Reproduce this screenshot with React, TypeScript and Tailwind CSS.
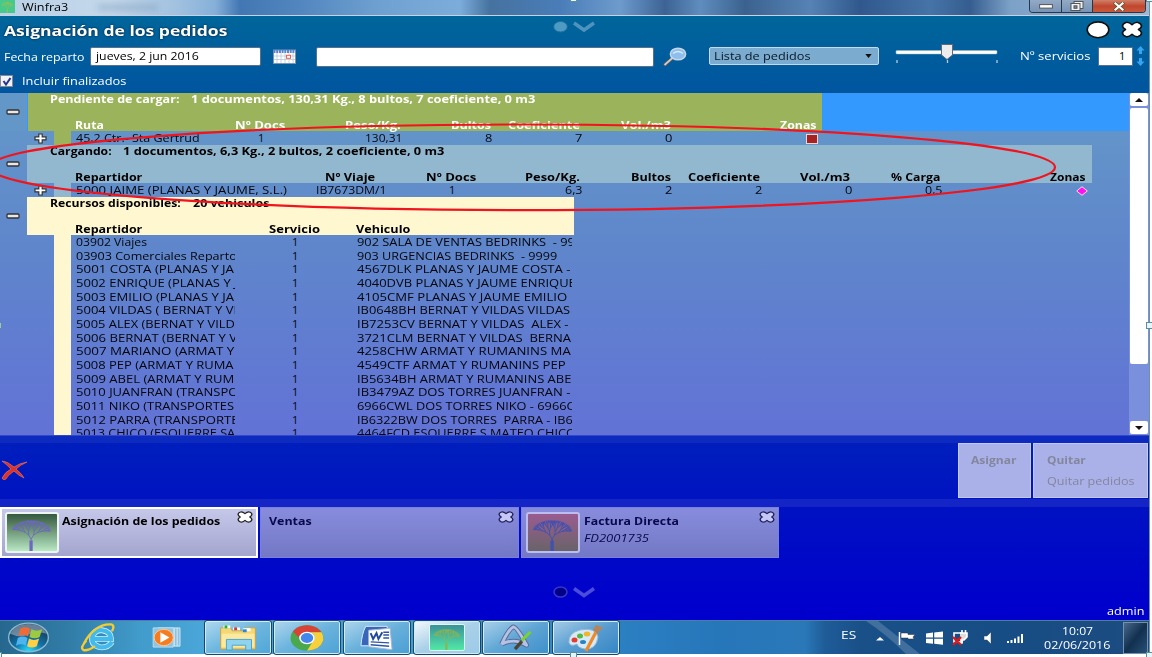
import React, { useLayoutEffect, useRef, useState } from "react";
import type { ReactNode } from "react";

/* Text stretched horizontally to fill the width of its box. */
function T({ c, children }: { c: string; children: string }) {
  const box = useRef<HTMLSpanElement>(null);
  const ink = useRef<HTMLSpanElement>(null);
  const [k, setK] = useState(1);
  useLayoutEffect(() => {
    if (box.current && ink.current) setK(box.current.offsetWidth / ink.current.offsetWidth);
  }, [children]);
  return (
    <span ref={box} className={"block shrink-0 whitespace-pre " + c}>
      <span ref={ink} className="inline-block origin-left" style={{ transform: `scaleX(${k})` }}>
        {children}
      </span>
    </span>
  );
}

function branches(x: number, y: number, a: number, spread: number, len: number, depth: number): string {
  if (depth === 0) return "";
  const x2 = x + Math.cos(a) * len;
  const y2 = y - Math.sin(a) * len * 0.84;
  return (
    `M${x.toFixed(1)} ${y.toFixed(1)}L${x2.toFixed(1)} ${y2.toFixed(1)}` +
    branches(x2, y2, a + spread, spread * 0.78, len * 0.88, depth - 1) +
    branches(x2, y2, a - spread * 1.1, spread * 0.78, len * 0.88, depth - 1)
  );
}
const CROWN = branches(26, 34, Math.PI / 2, 0.44, 6.6, 7);

function Tree({ className, stroke }: { className: string; stroke: string }) {
  return (
    <svg viewBox="0 0 54 42" preserveAspectRatio="none" className={className} fill="none" stroke={stroke}>
      <path d="M26 42V30" strokeWidth="3.5" />
      <path d={CROWN} strokeWidth="1" />
    </svg>
  );
}

function Minus() {
  return (
    <svg viewBox="0 0 14 6" className="h-[6px] w-[14px]">
      <rect x="1" y="1" width="12" height="4" rx="1" fill="#e8e8e8" stroke="#333" strokeWidth="1.3" />
    </svg>
  );
}

function Plus() {
  return (
    <svg viewBox="0 0 13 11" className="h-[11px] w-[13px]">
      <path d="M4.8 1h3.4v2.8H12v3H8.2V10H4.8V6.800H1v-3h3.800z" fill="#fff" stroke="#333" strokeWidth="1.2" />
    </svg>
  );
}

function Cross({ className, fill, stroke, w }: { className: string; fill: string; stroke: string; w: number }) {
  return (
    <svg viewBox="0 0 22 18" preserveAspectRatio="none" className={className}>
      <path
        d="M5 1.500Q8 1 11 4 14 1 17 1.500 20.500 2.500 20.500 5.500 20 7.500 17.500 9 20 10.500 20.500 12.500 20.500 15.500 17 16.500 14 17 11 14 8 17 5 16.500 1.500 15.500 1.500 12.500 2 10.500 4.500 9 2 7.500 1.500 5.500 1.500 2.500 5 1.500Z"
        fill={fill}
        stroke={stroke}
        strokeWidth={w}
        strokeLinejoin="round"
      />
    </svg>
  );
}

function TitleBar() {
  return (
    <div className="flex h-[16px] w-[1149px] items-start border-b border-[#c5d4e4] bg-[linear-gradient(90deg,#b9d0e6_0,#c4d8eb_110px,#9fc0df_180px,#86b0d9_215px,#4277b3_240px,#5286be_300px,#6fa1d0_380px,#7cacda_460px,#45729f_490px,#4a7db8_560px,#6d9bcc_620px,#3c6394_665px,#5f8dbd_700px,#3b628f_745px,#5683b4_810px,#30588c_860px,#4674a7_930px,#355d8f_970px,#7ca1c7_1010px,#9fb9d4_1149px)]">
      <div className="h-[13px] w-[15px] bg-[#45c98c]">
        <Tree className="h-[13px] w-[15px]" stroke="#a0c050" />
      </div>
      <T c="ml-[7px] w-[46px] text-[11px] leading-[14px] text-black">Winfra3</T>
      <div className="ml-[30px] mt-1 h-[7px] w-[60px] bg-[#7797b4]/40 blur-[3px]" />
      <div className="ml-auto mr-[3px] flex h-[13px] overflow-hidden rounded-b-[4px] border border-t-0 border-[#26384e]">
        <div className="flex w-[32px] items-center justify-center border-r border-[#26384e] bg-gradient-to-b from-[#93aac5] to-[#7793b5]">
          <svg viewBox="0 0 14 5" className="h-[5px] w-[14px]"><rect x=".6" y=".6" width="12.800" height="3.500" fill="#fff" stroke="#555" /></svg>
        </div>
        <div className="flex w-[31px] items-center justify-center border-r border-[#26384e] bg-gradient-to-b from-[#93aac5] to-[#7793b5]">
          <svg viewBox="0 0 14 11" className="h-[11px] w-[14px]" fill="#f2f2f2" stroke="#555">
            <rect x="4" y=".5" width="9" height="7" />
            <rect x="1" y="2.500" width="9" height="7" />
            <rect x="4" y="4.800" width="3" height="2.500" fill="#6f8cad" />
          </svg>
        </div>
        <div className="flex w-[52px] items-center justify-center bg-gradient-to-b from-[#cf8069] via-[#c1452c] to-[#c85a3c]">
          <svg viewBox="0 0 12 9" className="h-[9px] w-[12px]" fill="none" strokeLinecap="square">
            <path d="M2.500 1.500 9.500 7.500M9.500 1.500 2.500 7.500" stroke="#553" strokeWidth="3.600" />
            <path d="M2.500 1.500 9.500 7.500M9.500 1.500 2.500 7.500" stroke="#fff" strokeWidth="2.200" />
          </svg>
        </div>
      </div>
    </div>
  );
}

function Header() {
  return (
    <header className="h-[77px] w-full text-[11px] text-white">
      <div className="flex h-[28px]">
        <T c="ml-[4px] mt-[5px] w-[224px] text-[14px] font-bold leading-[20px] [text-shadow:0_0_2px_#012]">Asignación de los pedidos</T>
        <svg viewBox="0 0 44 14" className="ml-[325px] mt-[4px] h-[14px] w-[44px]">
          <ellipse cx="7.500" cy="6.700" rx="6.800" ry="5.300" fill="#4d9ac3" stroke="#1d6f9f" />
          <path d="M21 3 31 10 41 3" fill="none" stroke="#4d93bd" strokeWidth="3.500" />
        </svg>
        <svg viewBox="0 0 24 18" className="ml-auto mr-[11px] mt-[5px] h-[18px] w-[24px]">
          <ellipse cx="12" cy="8.800" rx="10.800" ry="7.900" fill="#fff" stroke="#111" strokeWidth="1.600" />
        </svg>
        <Cross className="mr-[6px] mt-[5px] h-[17px] w-[22px]" fill="#fff" stroke="#111" w={1.6} />
      </div>
      <div className="flex h-[28px]">
        <T c="ml-[4px] mt-[5px] w-[80px] leading-[16px]">Fecha reparto</T>
        <div className="ml-[6px] mt-[3px] h-[19px] w-[171px] rounded-[2px] border border-[#57708c] bg-white pl-[5px] text-black">
          <T c="w-[103px] leading-[16px]">jueves, 2 jun 2016</T>
        </div>
        <svg viewBox="0 0 23 15" className="ml-[12px] mt-[5px] h-[15px] w-[23px]">
          <rect x=".5" y="1" width="22" height="13.500" fill="#fff" stroke="#7895b5" />
          <path d="M.5 2.500h22" stroke="#5b84cf" strokeWidth="3" strokeDasharray="2 .7" />
          <path d="M4 4v10M8 4v10M12 4v10M16 4v10M20 4v10M1 7h21M1 10.500h21" stroke="#b7c6da" strokeWidth=".8" />
          <rect x="13.500" y="6.300" width="4" height="3" fill="#fff" stroke="#ee6244" />
        </svg>
        <div className="ml-[20px] mt-[3px] h-[20px] w-[338px] rounded-[2px] border border-[#57708c] bg-white" />
        <svg viewBox="0 0 24 20" className="ml-[9px] mt-[3px] h-[20px] w-[24px]">
          <path d="M1 18.500 10 10.500" stroke="#555" strokeWidth="3.400" />
          <path d="M1.500 18 10 10.500" stroke="#ccc" strokeWidth="1.800" />
          <ellipse cx="15" cy="7" rx="7.700" ry="5.800" fill="#8ebfec" stroke="#c5d7e8" strokeWidth="1.400" />
          <path d="M10 6.500q5-4 10 0" stroke="#d2e9fc" fill="none" strokeWidth="1.500" />
        </svg>
        <div className="ml-[22px] mt-[3px] flex h-[18px] w-[170px] rounded-[2px] border border-[#c5d9e8] bg-[#7babcf] pl-[4px] text-[#071725]">
          <T c="w-[96px] leading-[15px]">Lista de pedidos</T>
          <svg viewBox="0 0 8 5" className="ml-[54px] mt-[6px] h-[4px] w-[9px]"><path d="M0 0h8L4 5z" fill="#111" /></svg>
        </div>
        <svg viewBox="0 0 104 22" className="ml-[16px] mt-0 h-[22px] w-[104px]">
          <rect x="1" y="6.500" width="101" height="3.500" rx="1" fill="#fff" stroke="#9bb" strokeWidth=".5" />
          <path d="M2 16v3M52.500 16v3M102 16v3" stroke="#b4cbdb" strokeWidth="1.300" />
          <path d="M46.500.500h11v10.500l-5.500 4.500-5.500-4.500z" fill="#ededed" stroke="#667" />
        </svg>
        <T c="ml-[21px] mt-[4px] w-[70px] leading-[16px]">Nº servicios</T>
        <div className="ml-[8px] mt-[3px] h-[19px] w-[35px] rounded-[1px] border border-[#57708c] bg-white pl-[20px] text-black">
          <T c="w-[6px] leading-[16px]">1</T>
        </div>
        <svg viewBox="0 0 9 20" className="ml-[3px] mt-[2px] h-[20px] w-[9px]" fill="#35a5f2">
          <path d="M4.500 0 8.500 4.500H6V8H3V4.500H.5zM4.500 20 8.500 15.500H6V12H3v3.500H.5z" />
        </svg>
      </div>
      <div className="flex h-[18px] items-center">
        <div className="flex h-[12px] w-[13px] items-center justify-center border border-[#889] bg-[#f0f2f6]">
          <svg viewBox="0 0 10 9" className="h-[9px] w-[10px]"><path d="M1.500 4 4 7.500 8.500 1" fill="none" stroke="#27338e" strokeWidth="2" /></svg>
        </div>
        <T c="ml-[9px] w-[105px] leading-[16px]">Incluir finalizados</T>
      </div>
    </header>
  );
}

function Band({ cls, children }: { cls: string; children: ReactNode }) {
  return <div className={"ml-[27px] h-[38px] shrink-0 font-bold " + cls}>{children}</div>;
}

const RESOURCES = [
  { name: "03902 Viajes", nw: "w-[71px]", car: "902 SALA DE VENTAS BEDRINKS  - 99", cw: "w-[218px]" },
  { name: "03903 Comerciales Reparto", nw: "w-[161px]", car: "903 URGENCIAS BEDRINKS  - 9999", cw: "w-[200px]" },
  { name: "5001 COSTA (PLANAS Y JA", nw: "w-[158px]", car: "4567DLK PLANAS Y JAUME COSTA -", cw: "w-[214px]" },
  { name: "5002 ENRIQUE (PLANAS Y J", nw: "w-[161px]", car: "4040DVB PLANAS Y JAUME ENRIQUE", cw: "w-[219px]" },
  { name: "5003 EMILIO (PLANAS Y JA", nw: "w-[158px]", car: "4105CMF PLANAS Y JAUME EMILIO", cw: "w-[210px]" },
  { name: "5004 VILDAS ( BERNAT Y VI", nw: "w-[161px]", car: "IB0648BH BERNAT Y VILDAS VILDAS", cw: "w-[213px]" },
  { name: "5005 ALEX (BERNAT Y VILD", nw: "w-[159px]", car: "IB7253CV BERNAT Y VILDAS  ALEX -", cw: "w-[211px]" },
  { name: "5006 BERNAT (BERNAT Y V", nw: "w-[161px]", car: "3721CLM BERNAT Y VILDAS  BERNA", cw: "w-[214px]" },
  { name: "5007 MARIANO (ARMAT Y", nw: "w-[158px]", car: "4258CHW ARMAT Y RUMANINS MA", cw: "w-[214px]" },
  { name: "5008 PEP (ARMAT Y RUMA", nw: "w-[158px]", car: "4549CTF ARMAT Y RUMANINS PEP", cw: "w-[209px]" },
  { name: "5009 ABEL (ARMAT Y RUM", nw: "w-[158px]", car: "IB5634BH ARMAT Y RUMANINS ABE", cw: "w-[214px]" },
  { name: "5010 JUANFRAN (TRANSPO", nw: "w-[162px]", car: "IB3479AZ DOS TORRES JUANFRAN -", cw: "w-[213px]" },
  { name: "5011 NIKO (TRANSPORTES", nw: "w-[158px]", car: "6966CWL DOS TORRES NIKO - 6966C", cw: "w-[217px]" },
  { name: "5012 PARRA (TRANSPORTE", nw: "w-[162px]", car: "IB6322BW DOS TORRES  PARRA - IB6", cw: "w-[216px]" },
  { name: "5013 CHICO (ESQUERRE SA", nw: "w-[159px]", car: "4464FCD ESQUERRE S MATEO CHICO", cw: "w-[219px]" },
];

function Grid() {
  return (
    <div className="relative flex h-[342px] bg-gradient-to-b from-[#6499c8] via-[#5f86cb] via-45% to-[#6272d6] text-[11px] leading-[14px] text-[#04060c]">
      <div className="flex w-[1129px] flex-col overflow-hidden">
        <div className="flex h-[38px] bg-[#3399ff]">
          <div className="flex w-[27px] items-center justify-center bg-[#6297c8] pr-[1px]"><Minus /></div>
          <div className="w-[795px] border-l border-[#3399ff] bg-[#9bb35a] font-bold text-white">
            <div className="flex h-[25px]">
              <T c="ml-[22px] w-[129px] leading-[12px]">Pendiente de cargar:</T>
              <T c="ml-[12px] w-[344px] leading-[12px]">1 documentos, 130,31 Kg., 8 bultos, 7 coeficiente, 0 m3</T>
            </div>
            <div className="flex h-[13px]">
              <T c="ml-[47px] w-[29px]">Ruta</T>
              <T c="ml-[131px] w-[50px]">Nº Docs</T>
              <T c="ml-[60px] w-[56px]">Peso/Kg.</T>
              <T c="ml-[50px] w-[40px]">Bultos</T>
              <T c="ml-[17px] w-[72px]">Coeficiente</T>
              <T c="ml-[41px] w-[50px]">Vol./m3</T>
              <T c="ml-[109px] w-[37px]">Zonas</T>
            </div>
          </div>
        </div>
        <div className="flex h-[14px] shrink-0">
          <div className="ml-[34px] mt-[2px] w-[20px]"><Plus /></div>
          <div className="h-[14px] w-[17px] bg-[#9bb35a]" />
          <T c="ml-[5px] w-[124px]">45,2 Ctr.- Sta Gertrud</T>
          <T c="ml-[58px] w-[6px]">1</T>
          <T c="ml-[101px] w-[37px]">130,31</T>
          <T c="ml-[83px] w-[7px]">8</T>
          <T c="ml-[83px] w-[7px]">7</T>
          <T c="ml-[83px] w-[7px]">0</T>
          <div className="ml-[134px] mt-[3px] h-[10px] w-[12px] border border-[#e4d8dc] bg-[#a82222]" />
        </div>
        <Band cls="w-[1065px] bg-[#92b8d0] text-black">
          <div className="flex h-[25px]">
            <T c="ml-[23px] w-[62px] leading-[12px]">Cargando:</T>
            <T c="ml-[11px] w-[321px] leading-[12px]">1 documentos, 6,3 Kg., 2 bultos, 2 coeficiente, 0 m3</T>
          </div>
          <div className="flex h-[13px]">
            <T c="ml-[48px] w-[67px]">Repartidor</T>
            <T c="ml-[183px] w-[50px]">Nº Viaje</T>
            <T c="ml-[51px] w-[50px]">Nº Docs</T>
            <T c="ml-[49px] w-[55px]">Peso/Kg.</T>
            <T c="ml-[51px] w-[40px]">Bultos</T>
            <T c="ml-[17px] w-[72px]">Coeficiente</T>
            <T c="ml-[40px] w-[50px]">Vol./m3</T>
            <T c="ml-[41px] w-[49px]">% Carga</T>
            <T c="ml-[110px] w-[36px]">Zonas</T>
          </div>
        </Band>
        <div className="flex h-[14px] shrink-0">
          <div className="ml-[34px] mt-[2px] w-[20px]"><Plus /></div>
          <div className="h-[14px] w-[17px] bg-[#92b8d0]" />
          <T c="ml-[5px] w-[211px]">5000 JAIME (PLANAS Y JAUME, S.L.)</T>
          <T c="ml-[29px] w-[71px]">IB7673DM/1</T>
          <T c="ml-[62px] w-[6px]">1</T>
          <T c="ml-[110px] w-[17px]">6,3</T>
          <T c="ml-[83px] w-[7px]">2</T>
          <T c="ml-[83px] w-[7px]">2</T>
          <T c="ml-[83px] w-[7px]">0</T>
          <T c="ml-[73px] w-[17px]">0,5</T>
          <svg viewBox="0 0 12 10" className="ml-[134px] mt-[3px] h-[10px] w-[12px]"><path d="M6 .7 11.300 5 6 9.300.7 5z" fill="#ff10ee" stroke="#f7d8f7" /></svg>
        </div>
        <Band cls="w-[547px] bg-[#fff7d0] text-black">
          <div className="flex h-[25px]">
            <T c="ml-[23px] w-[131px] leading-[12px]">Recursos disponibles:</T>
            <T c="ml-[12px] w-[76px] leading-[12px]">20 vehiculos</T>
          </div>
          <div className="flex h-[13px]">
            <T c="ml-[48px] w-[67px]">Repartidor</T>
            <T c="ml-[127px] w-[51px]">Servicio</T>
            <T c="ml-[36px] w-[54px]">Vehiculo</T>
          </div>
        </Band>
        <div className="flex h-[200px] overflow-hidden">
          <div className="ml-[54px] w-[17px] shrink-0 bg-[#fff7d0]" />
          <div className="flex flex-col">
            {RESOURCES.map((r) => (
              <div key={r.name} className="flex h-[13.670px] shrink-0">
                <div className="ml-[5px] w-[159px] overflow-hidden">
                  <T c={r.nw}>{r.name}</T>
                </div>
                <T c="ml-[57px] w-[6px]">1</T>
                <div className="ml-[59px] w-[215px] overflow-hidden">
                  <T c={r.cw}>{r.car}</T>
                </div>
              </div>
            ))}
          </div>
        </div>
      </div>
      <div className="flex w-[20px] flex-col items-center bg-[#7b90dc]">
        <div className="flex h-[13px] w-[18px] items-center justify-center rounded-[2px] bg-white">
          <svg viewBox="0 0 8 4" className="h-[4px] w-[8px]"><path d="M4 0 8 4H0z" fill="#111" /></svg>
        </div>
        <div className="mt-[2px] h-[256px] w-[18px] rounded-[2px] bg-white" />
        <div className="mb-px mt-auto flex h-[13px] w-[18px] items-center justify-center rounded-[2px] bg-white">
          <svg viewBox="0 0 8 4" className="h-[4px] w-[8px]"><path d="M0 0h8L4 4z" fill="#111" /></svg>
        </div>
      </div>
      <div className="absolute left-[6px] top-[68px] leading-[0]"><Minus /></div>
      <div className="absolute left-[6px] top-[120px] leading-[0]"><Minus /></div>
    </div>
  );
}

function Tabs() {
  return (
    <div className="flex h-[51px] gap-[2px] text-[11px] leading-[15px]">
      <div className="flex h-[51px] w-[258px] border-2 border-white bg-gradient-to-b from-[#c6c8ea] to-[#a3a5ce] text-black">
        <div className="ml-[3px] mt-[3px] h-[41px] w-[54px] rounded-[3px] border-2 border-[#eef4f2] bg-gradient-to-b from-[#365a40] to-[#b8e8c4]">
          <Tree className="h-[37px] w-[50px]" stroke="#6d68c0" />
        </div>
        <T c="ml-[3px] mt-[4px] w-[158px] font-bold">Asignación de los pedidos</T>
        <Cross className="ml-[17px] mt-[2px] h-[12px] w-[16px]" fill="#fff" stroke="#222" w={1.8} />
      </div>
      <div className="flex h-[51px] w-[259px] border border-[#7c80dc] bg-gradient-to-b from-[#888cdc] to-[#7378c6] text-[#08084a]">
        <T c="ml-[8px] mt-[5px] w-[43px] font-bold">Ventas</T>
        <Cross className="ml-auto mr-[4px] mt-[3px] h-[12px] w-[16px]" fill="#c5c8f4" stroke="#20205c" w={1.8} />
      </div>
      <div className="flex h-[51px] w-[258px] border border-[#7c80dc] bg-gradient-to-b from-[#888cdc] to-[#7378c6] text-[#08084a]">
        <div className="ml-[4px] mt-[4px] h-[41px] w-[54px] rounded-[3px] border-2 border-[#b9bdf0] bg-gradient-to-b from-[#9a5b90] to-[#696369]">
          <Tree className="h-[37px] w-[50px]" stroke="#4050b0" />
        </div>
        <div className="ml-[4px] mt-[5px]">
          <T c="w-[95px] font-bold leading-[15px]">Factura Directa</T>
          <T c="mt-[2px] w-[65px] italic">FD2001735</T>
        </div>
        <Cross className="ml-auto mr-[3px] mt-[3px] h-[12px] w-[16px]" fill="#c5c8f4" stroke="#20205c" w={1.8} />
      </div>
    </div>
  );
}

function TaskButton({ active, children }: { active?: boolean; children: ReactNode }) {
  return (
    <div
      className={
        "flex h-[33px] w-[66px] shrink-0 items-center justify-center rounded-[2px] border border-[#d3ebf8] outline outline-1 outline-[#184868] " +
        (active ? "bg-gradient-to-br from-[#f0f8fc] via-[#a8d0e8] to-[#9ccbe8]" : "bg-gradient-to-br from-white/55 via-white/20 to-white/5")
      }
    >
      {children}
    </div>
  );
}

function TaskBar() {
  return (
    <div className="flex h-[34px] w-[1149px] items-center border-t border-[#4e7da0] bg-[linear-gradient(90deg,#26678e_0,#317da8_70px,#419bcb_140px,#4aa6d8_200px,#4099d0_450px,#2b80c2_620px,#2676ba_720px,#2a78b8_805px,#1e5c98_825px,#1a5088_860px,#164d84_1000px,#1d4c80_1149px)]">
      <svg viewBox="0 0 44 32" className="ml-[7px] h-[31px] w-[43px]">
        <defs>
          <radialGradient id="orb" cx=".5" cy=".95" r=".8">
            <stop offset="0" stopColor="#24dcff" /><stop offset=".45" stopColor="#1173a8" /><stop offset="1" stopColor="#173d5c" />
          </radialGradient>
        </defs>
        <ellipse cx="22" cy="16" rx="20.500" ry="14.800" fill="url(#orb)" stroke="#8db9d0" strokeWidth="1.400" />
        <path d="M3 12Q8 2 22 2T41 12Q30 9 22 13T3 12" fill="#fff" opacity=".35" />
        <path d="M13.500 7q5-3 10 0l-2 8q-5-3-10 0z" fill="#ef6a35" />
        <path d="M25 7.500q5 3 11 0l-2.500 8q-5 2.500-10.500 0z" fill="#9ccb43" />
        <path d="M11 16.500q5-3 10 0l-2 8q-5-3-10 0z" fill="#4db4f0" />
        <path d="M22.500 17q5 3 10.500 0l-2.500 8q-5 2.500-10 0z" fill="#ffd044" />
      </svg>
      <svg viewBox="0 0 36 30" className="ml-[30px] h-[29px] w-[36px]" fill="none">
        <path d="M32.500 19.500Q28 26 20 25 11 23 12 15 14 7 22 7.500q9 1 9.500 9H13" stroke="#c6f0fc" strokeWidth="6" />
        <path d="M32.500 19.500Q28 26 20 25 11 23 12 15 14 7 22 7.500q9 1 9.500 9H13" stroke="#43b9ec" strokeWidth="4.400" />
        <path d="M6 18Q-1 26 3 28q4 1 12-4M3 22Q14 1 31 1.500q5 .5 1.500 7" stroke="#f7cc2d" strokeWidth="2.400" />
      </svg>
      <svg viewBox="0 0 34 24" className="ml-[36px] h-[23px] w-[33px]">
        <path d="M6 2h23v19H6z" fill="#8fc0dd" stroke="#cde8f5" /><path d="M26 2v19M23 2v19" stroke="#d3edf8" />
        <path d="M1 2h21v20H1z" fill="#91c2de" stroke="#b8dff0" />
        <ellipse cx="12" cy="12" rx="10" ry="8.500" fill="#f57d1f" stroke="#ffc999" />
        <path d="M8.500 6.500 18 12 8.500 17.500z" fill="#fff" />
      </svg>
      <div className="ml-[19.500px] flex gap-[3.700px]">
        <TaskButton>
          <svg viewBox="0 0 38 28" className="h-[27px] w-[38px]">
            <path d="M1 4h10l2 3h11l2-3h11v22H1z" fill="#f4d878" stroke="#c7a14a" />
            <path d="M4 3h7M14 5h7M24 6h8" stroke="#fff" strokeWidth="3" /><path d="M5 3h3" stroke="#28b428" strokeWidth="3" />
            <path d="M15 5h3" stroke="#d33a2a" strokeWidth="3" /><path d="M24 7h4" stroke="#2a88d8" strokeWidth="3" />
            <path d="M2 10h34v14H2z" fill="#fbe9a0" />
            <path d="M7 27V16h26v11h-6v-5H13v5z" fill="#8fd3ee" stroke="#4aa3cc" />
          </svg>
        </TaskButton>
        <TaskButton>
          <svg viewBox="0 0 34 26" className="h-[26px] w-[34px]">
            <ellipse cx="17" cy="13" rx="16.500" ry="12.700" fill="#4aa84e" />
            <path d="M2.800 6.500Q8 .3 17 .3t14.500 6.900H17q-7 0-7.800 5.800z" fill="#d94335" />
            <path d="M31.500 7.200Q34 11 33 16 30 25 17 25.700L25 13q0-4-5-5.800z" fill="#f8cf3c" />
            <ellipse cx="17" cy="13" rx="7.800" ry="6.200" fill="#fff" /><ellipse cx="17" cy="13" rx="6.200" ry="5" fill="#4387ee" />
          </svg>
        </TaskButton>
        <TaskButton>
          <svg viewBox="0 0 36 26" className="h-[26px] w-[35px]">
            <path d="M7 1h22v20H2Q3 8 7 1" fill="#3866b8" stroke="#dcecff" />
            <path d="M10 5 32 3 34 25 10 22z" fill="#fff" stroke="#a8b8d0" />
            <path d="m12 8 2.500 6L18 8l2 6 4-7" fill="none" stroke="#214a9c" strokeWidth="2" />
            <path d="M25 7h6M25 10h6M25 13h6M12 17l19 1M12 20l19 1.500" stroke="#2e56a5" strokeWidth="1.500" />
          </svg>
        </TaskButton>
        <TaskButton active>
          <div className="h-[27px] w-[36px] rounded-[2px] border border-[#dbf7ee] bg-gradient-to-b from-[#3c9298] to-[#52e8a4]">
            <Tree className="h-[25px] w-[34px]" stroke="#8db552" />
          </div>
        </TaskButton>
        <TaskButton>
          <svg viewBox="0 0 36 28" className="h-[27px] w-[36px]" fill="none">
            <path d="M3 21Q10 6 15 3q4 0 14 19Q16 14 3 21" stroke="#5a6a96" strokeWidth="5" strokeLinejoin="round" />
            <path d="M3 21Q10 6 15 3q4 0 14 19Q16 14 3 21" stroke="#b4c2e4" strokeWidth="3" strokeLinejoin="round" />
            <path d="M17 26 24 18" stroke="#494436" strokeWidth="3.500" /><path d="M24 17 33 8" stroke="#7bd32c" strokeWidth="3" />
          </svg>
        </TaskButton>
        <TaskButton>
          <svg viewBox="0 0 38 28" className="h-[28px] w-[38px]">
            <path d="M2 19Q1 9 13 6q16-3 18 7-2 13-13 12-7-1-8-5-6 3-8-1" fill="#d6ebf7" stroke="#96bad3" />
            <ellipse cx="7.500" cy="16" rx="3" ry="2.500" fill="#e43b2e" /><ellipse cx="13" cy="12" rx="3" ry="2.500" fill="#55b840" />
            <ellipse cx="20" cy="10" rx="3.300" ry="2.500" fill="#f3b52b" /><ellipse cx="16" cy="18" rx="3" ry="2" fill="#2b83c5" />
            <path d="M19 27 29 8" stroke="#ef8a2b" strokeWidth="3.200" /><path d="m26 6 3-5 7 3-6 5z" fill="#b98355" />
          </svg>
        </TaskButton>
      </div>
      <div className="ml-auto flex h-full items-center text-[11px] text-white">
        <T c="-mt-[5px] w-[15px] leading-[16px]">ES</T>
        <svg viewBox="0 0 158 18" className="ml-[19px] h-[18px] w-[158px] self-center">
          <path d="M1 11.500 5 8l4 3.500z" fill="#fff" />
          <path d="M24.500 3v13" stroke="#fff" strokeWidth="1.500" /><path d="M26 4h7v1.500h7l-2 2.500 1 2h-6V9h-7z" fill="#fff" stroke="#333" strokeWidth=".5" />
          <path d="M51 4.500 58 3.600v5H51zM59.200 3.500 68 2.500v6.100h-8.800zM51 9.800h7v5L51 14zM59.200 9.800H68v6l-8.800-1z" fill="#fff" />
          <path d="M79 4h8v9h-8z" fill="none" stroke="#fff" strokeWidth="1.600" /><path d="M85 4h7v4l-3 3h-2v3h-2M87 1v3M90.500 1v3" stroke="#fff" strokeWidth="1.600" fill="#ddd" />
          <path d="m78 8 8 8M86 8l-8 8" stroke="#e31616" strokeWidth="2.300" />
          <path d="M109 7h3l4-4v12l-4-4h-3z" fill="#fff" stroke="#345" strokeWidth=".5" />
          <path d="M133 14v-2M136.500 14v-3M140 14V9.500M143.500 14V7.500M147 14V5" stroke="#fff" strokeWidth="2" />
        </svg>
        <div className="ml-[11px] w-[66px]">
          <T c="ml-[18px] w-[31px] leading-[14px]">10:07</T>
          <T c="w-[66px] leading-[14px]">02/06/2016</T>
        </div>
        <div className="ml-[13px] mr-px h-[32px] w-[25px] border border-[#7590ac] bg-gradient-to-br from-[#4a6a8c] via-[#12304f] to-[#275178]" />
      </div>
    </div>
  );
}

export default function App() {
  return (
    <div className="relative h-[657px] w-[1152px] overflow-hidden bg-white [font-family:'Open_Sans','Noto_Sans',sans-serif]">
      <TitleBar />
      <div className="flex h-[604px] w-[1149px] flex-col bg-[linear-gradient(180deg,#00669a_0,#00559f_76px,#0022bb_410px,#0012c2_490px,#0000cc_590px)]">
        <Header />
        <Grid />
        <div className="h-[8px] border-t border-[#3248cc] bg-white/5" />
        <div className="flex h-[56px] items-start text-[11px] text-[#84869c]">
          <svg viewBox="0 0 28 20" className="mt-[17px] h-[20px] w-[28px]">
            <path d="M2 1q5 0 12 6 6-4 13-5-7 3-11 7 6 5 8 9-5-2-10-7-7 5-8 8-3 2-4-1 3-6 9-9Q6 4 2 1" fill="#dd3328" stroke="#ef7a62" strokeWidth=".6" />
          </svg>
          <div className="ml-auto h-[55px] w-[73px] border border-[#c2c8f2] bg-[#a9b1e8]">
            <T c="ml-[12px] mt-[8px] w-[46px] font-bold leading-[16px]">Asignar</T>
          </div>
          <div className="ml-[2px] mr-px h-[55px] w-[115px] border border-[#c2c8f2] bg-[#a9b1e8]">
            <T c="ml-[13px] mt-[8px] w-[39px] font-bold leading-[16px]">Quitar</T>
            <T c="ml-[13px] mt-[5px] w-[87px] leading-[16px]">Quitar pedidos</T>
          </div>
        </div>
        <div className="h-[8px] bg-white/8" />
        <Tabs />
        <div className="flex flex-1 flex-col">
          <svg viewBox="0 0 44 14" className="ml-[553px] mt-[27px] h-[14px] w-[44px]">
            <ellipse cx="7.500" cy="7" rx="6.500" ry="5" fill="#000088" stroke="#3838c8" strokeWidth="1.500" />
            <path d="M21 3.500 31 10.500 41 3.500" fill="none" stroke="#4c4cdc" strokeWidth="3.500" />
          </svg>
          <T c="ml-auto mr-[4px] mt-[4px] w-[38px] text-[11px] leading-[15px] text-white">admin</T>
        </div>
      </div>
      <TaskBar />
      <svg viewBox="0 0 1152 657" className="pointer-events-none absolute inset-0 h-[657px] w-[1152px]" fill="none">
        <path d="M866 621h12q18 14 42 33h-14q-20-20-40-33" fill="#b8d0e4" opacity=".25" />
        <ellipse cx="522.500" cy="167.300" rx="532.500" ry="42.800" stroke="#f0141e" strokeWidth="2.200" />
        <path d="M1149.500 0V655" stroke="#6f8fa8" />
        <g fill="#e4f6fa" stroke="#5f8c99">
          <rect x="570.500" y="-4" width="6" height="5.500" /><rect x="1146.500" y="-4" width="6" height="5.500" />
          <rect x="-4" y="322.500" width="5" height="6" /><rect x="1146.500" y="322.500" width="6" height="6" />
          <rect x="-4" y="652.500" width="5.500" height="6" /><rect x="570.500" y="652.500" width="6" height="6" /><rect x="1146.500" y="652.500" width="6" height="6" />
        </g>
      </svg>
    </div>
  );
}
